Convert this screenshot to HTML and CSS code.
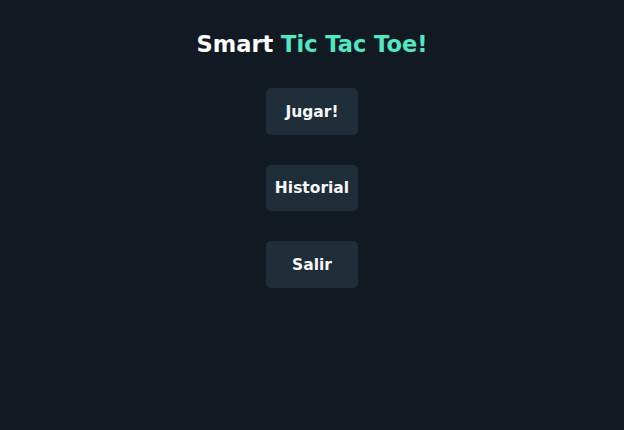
FILE: index.html
```html
<!DOCTYPE html>
<html lang="es">
<head>
<meta charset="utf-8">
<title>Smart Tic Tac Toe!</title>
<link rel="stylesheet" href="styles.css">
</head>
<body>
<main class="menu">
  <h1 class="title">Smart <span class="accent">Tic Tac Toe!</span></h1>
  <nav class="actions">
    <button class="btn">Jugar!</button>
    <button class="btn">Historial</button>
    <button class="btn">Salir</button>
  </nav>
</main>
</body>
</html>
```

FILE: styles.css
```css
html, body {
  margin: 0;
  height: 100%;
  background: #111a22;
}
body {
  font-family: "DejaVu Sans", sans-serif;
}
.menu {
  display: flex;
  flex-direction: column;
  align-items: center;
  padding-top: 31px;
}
.title {
  margin: 0;
  font-size: 22.5px;
  line-height: 26px;
  font-weight: bold;
  color: #ffffff;
}
.accent {
  color: #4fe8c1;
}
.actions {
  display: flex;
  flex-direction: column;
  align-items: center;
  gap: 30px;
  margin-top: 31px;
}
.btn {
  width: 92px;
  height: 46.5px;
  border: none;
  border-radius: 5px;
  background: #1f2d39;
  color: #f6f7f8;
  font-family: "DejaVu Sans", sans-serif;
  font-weight: bold;
  font-size: 15.5px;
  padding: 1px 0 0;
}
```
